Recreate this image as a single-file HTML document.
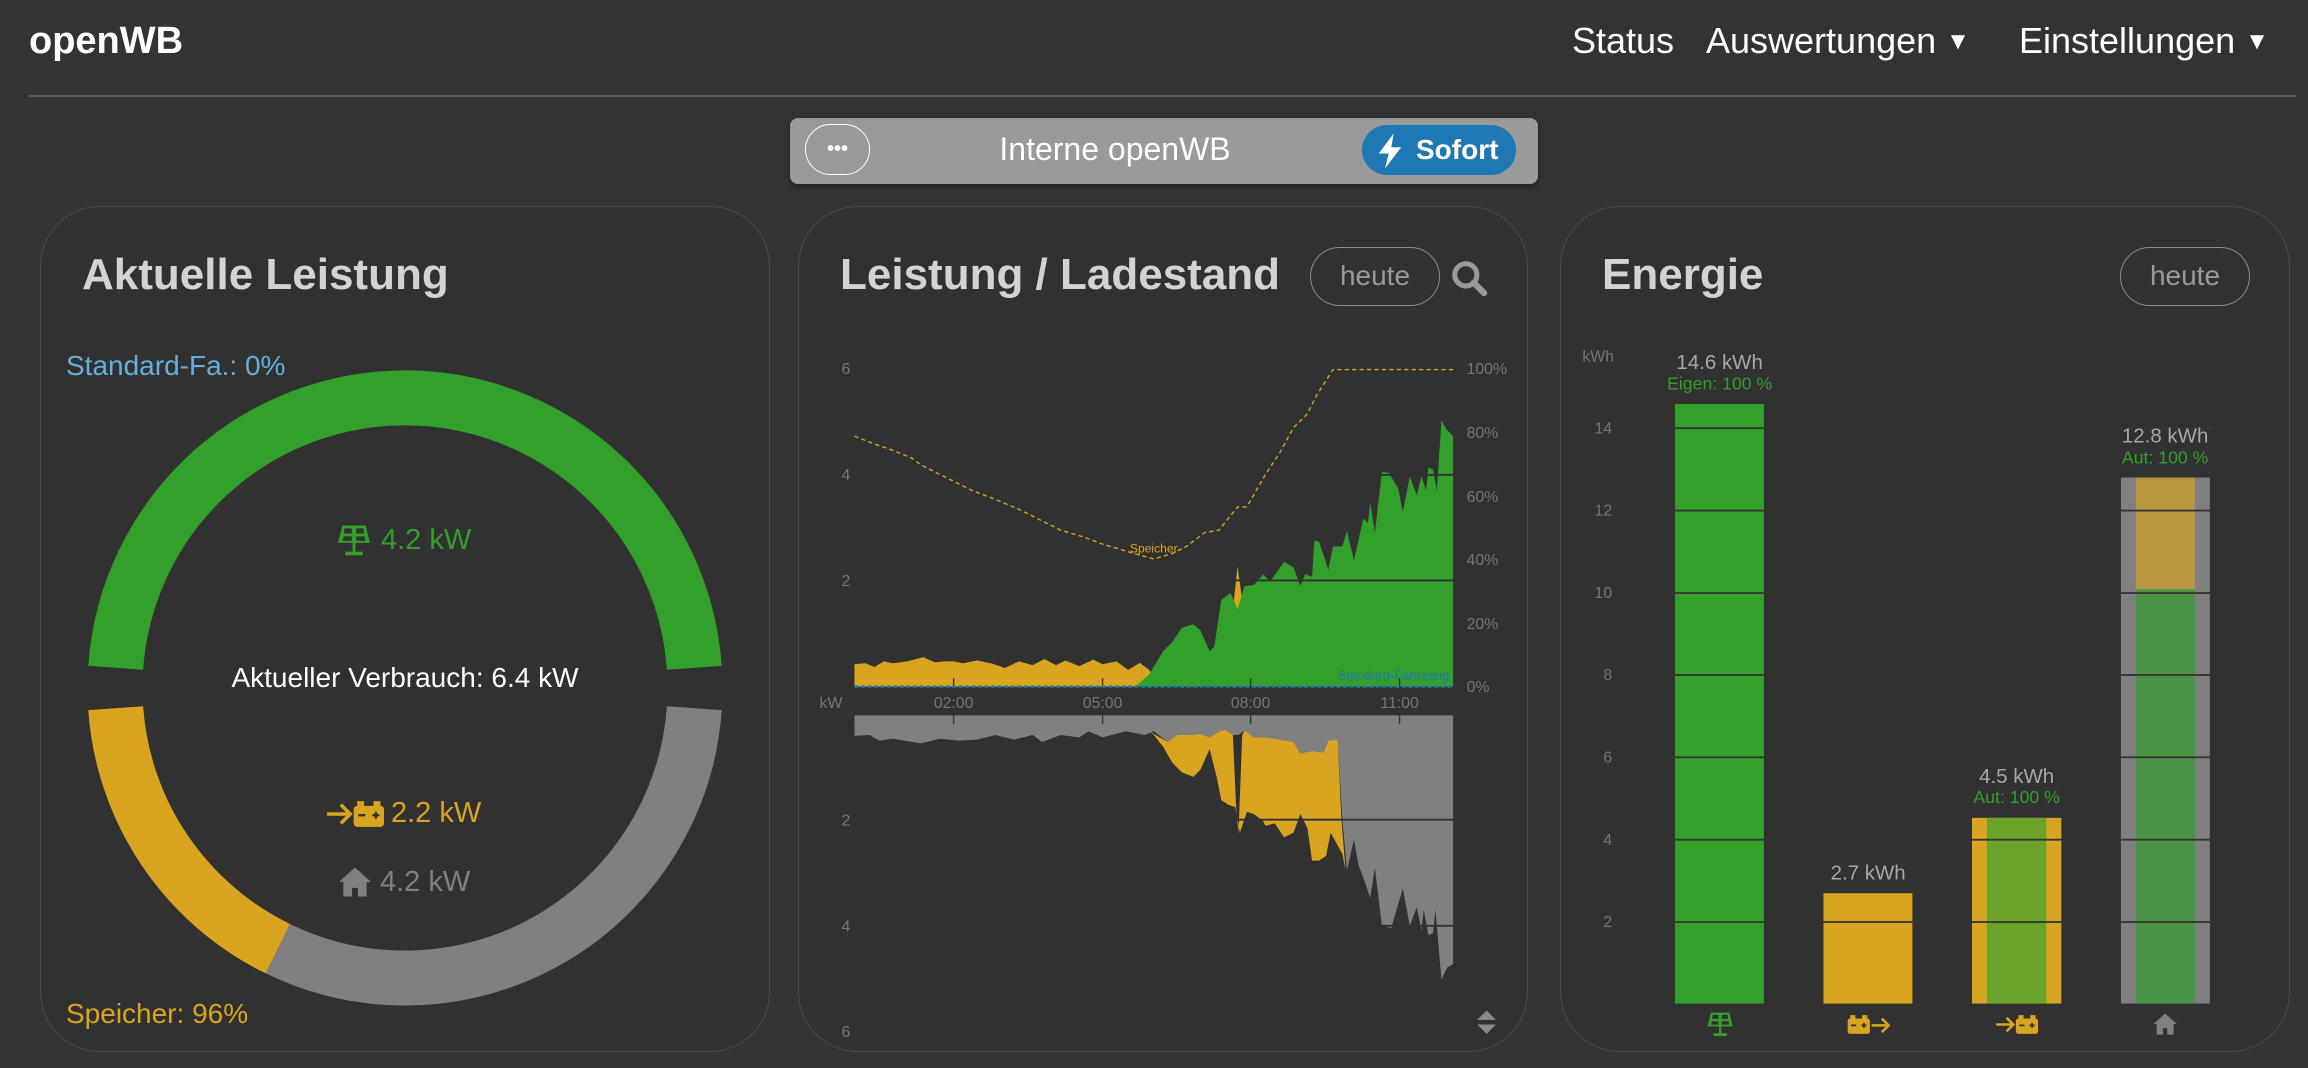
<!DOCTYPE html>
<html><head><meta charset="utf-8"><style>
*{margin:0;padding:0;box-sizing:border-box}
body{width:2308px;height:1068px;background:#333333;font-family:"Liberation Sans",sans-serif;overflow:hidden;position:relative}
.abs{position:absolute}
.card{position:absolute;top:206px;width:730px;height:846px;border:1px solid #4a4a4a;border-radius:60px;background:#313131}
.title{position:absolute;top:250px;font-size:44px;font-weight:bold;color:#d3d3d3;white-space:nowrap}
.btn{position:absolute;top:247px;width:130px;height:59px;border:1.5px solid #8a8a8a;border-radius:30px;color:#9a9a9a;font-size:28px;text-align:center;line-height:56px}
.nav{position:absolute;top:20px;font-size:36px;color:#fff;white-space:nowrap}
</style></head><body>
<div class="abs" style="left:29px;top:20px;font-size:38px;font-weight:bold;color:#fff">openWB</div>
<div class="nav" style="left:1572px">Status</div>
<div class="nav" style="left:1706px">Auswertungen <span style="font-size:24px;position:relative;top:-4px">▼</span></div>
<div class="nav" style="left:2019px">Einstellungen <span style="font-size:24px;position:relative;top:-4px">▼</span></div>
<div class="abs" style="left:29px;top:95px;width:2267px;height:2px;background:#5a5a5a"></div>

<div class="abs" style="left:790px;top:118px;width:748px;height:66px;background:#9a9a9a;border-radius:8px;box-shadow:0 2px 6px rgba(0,0,0,.4)"></div>
<div class="abs" style="left:805px;top:124px;width:65px;height:51px;border:1.5px solid #fff;border-radius:26px;color:#fff;font-size:20px;font-weight:bold;text-align:center;line-height:48px">•••</div>
<div class="abs" style="left:990px;top:131px;width:250px;text-align:center;color:#fff;font-size:32px">Interne openWB</div>
<div class="abs" style="left:1362px;top:125px;width:154px;height:50px;background:#1f78b4;border-radius:25px;color:#fff;font-size:28px;font-weight:bold;line-height:50px;padding-left:54px">Sofort</div>
<svg class="abs" style="left:1375px;top:132px" width="30" height="38" viewBox="0 0 24 30"><path d="M15 1 L3 17 H11 L8 29 L21 12 H13 Z" fill="#fff"/></svg>

<!-- Card 1 -->
<div class="card" style="left:40px"></div>
<div class="title" style="left:82px">Aktuelle Leistung</div>
<div class="abs" style="left:66px;top:350px;font-size:28px;color:#66aedb">Standard-Fa.: 0%</div>
<div class="abs" style="left:66px;top:998px;font-size:28px;color:#d9a521">Speicher: 96%</div>
<svg class="abs" style="left:0;top:0" width="800" height="1068">
<path d="M115.7,667.8 A290,290 0 0 1 694.3,667.8" fill="none" stroke="#33a02c" stroke-width="55"/>
<path d="M115.7,708.2 A290,290 0 0 0 277.9,948.7" fill="none" stroke="#d9a521" stroke-width="55"/>
<path d="M277.9,948.7 A290,290 0 0 0 694.3,708.2" fill="none" stroke="#808080" stroke-width="55"/>
</svg>
<svg class="abs" style="left:336px;top:524px" width="36" height="32" viewBox="0 0 24 22"><path d="M4 1H20L23 13H1Z" fill="#33a02c"/><path d="M5.5 3H10.5V6.5H5ZM13.5 3H18.5L19 6.5H13.5ZM5 8.5H10.5V11.5H4ZM13.5 8.5H19.2L20 11.5H13.5Z" fill="#313131"/><rect x="11" y="13" width="2" height="6" fill="#33a02c"/><rect x="6" y="19" width="12" height="2.5" fill="#33a02c"/></svg>
<div class="abs" style="left:381px;top:524px;font-size:29px;color:#33a02c">4.2 kW</div>
<div class="abs" style="left:105px;top:662px;width:600px;text-align:center;font-size:28px;color:#fff">Aktueller Verbrauch: 6.4 kW</div>
<svg class="abs" style="left:325px;top:800px" width="62" height="28" viewBox="0 0 52 24"><path d="M1 12H20M13 4L21 12L13 20" fill="none" stroke="#d9a521" stroke-width="3"/><rect x="24" y="5" width="26" height="18" rx="3" fill="#d9a521"/><rect x="27" y="1" width="6" height="5" fill="#d9a521"/><rect x="41" y="1" width="6" height="5" fill="#d9a521"/><path d="M28 13H34M40 13H46M43 10V16" stroke="#313131" stroke-width="2"/></svg>
<div class="abs" style="left:391px;top:797px;font-size:29px;color:#d9a521">2.2 kW</div>
<svg class="abs" style="left:337px;top:866px" width="36" height="32" viewBox="0 0 24 22"><path d="M12 1L1 11H4V21H10V15H14V21H20V11H23Z" fill="#808080"/></svg>
<div class="abs" style="left:380px;top:866px;font-size:29px;color:#808080">4.2 kW</div>

<!-- Card 2 -->
<div class="card" style="left:798px"></div>
<div class="title" style="left:840px">Leistung / Ladestand</div>
<div class="btn" style="left:1310px">heute</div>
<svg class="abs" style="left:1450px;top:258px" width="38" height="40" viewBox="0 0 24 24"><circle cx="10" cy="10" r="7" fill="none" stroke="#9a9a9a" stroke-width="3.2"/><path d="M15 15L21.5 21.5" stroke="#9a9a9a" stroke-width="4" stroke-linecap="round"/></svg>
<svg class="abs" style="left:0;top:0" width="2308" height="1068">
<g transform="translate(800,330) scale(0.4655)" font-family="Liberation Sans, sans-serif" font-size="34" fill="#777">
<path d="M117,766 L117,718 L140,716 L160,724 L180,712 L200,716 L230,712 L265,703 L290,714 L310,712 L330,712 L350,716 L380,710 L410,716 L440,726 L470,712 L500,720 L525,707 L550,720 L570,710 L600,722 L630,708 L650,718 L680,712 L705,730 L730,715 L750,730 L760,745 L740,766 Z" fill="#d9a521"/>
<path d="M930,600 L940,508 L950,580 L940,620 Z" fill="#d9a521"/>
<path d="M720,766 L750,740 L780,690 L800,670 L820,640 L845,632 L860,645 L880,690 L890,680 L905,580 L925,565 L940,600 L955,550 L975,548 L995,525 L1010,540 L1040,498 L1060,510 L1075,550 L1085,525 L1100,530 L1105,452 L1115,455 L1135,515 L1145,465 L1165,465 L1175,432 L1190,495 L1210,405 L1220,415 L1225,370 L1235,435 L1250,305 L1265,307 L1285,340 L1295,390 L1310,315 L1325,355 L1335,315 L1345,345 L1350,295 L1360,300 L1368,345 L1378,195 L1390,215 L1403,228 L1403,766 Z" fill="#33a02c"/>
<path d="M117,828 L1403,828 L1403,1362 L1390,1370 L1378,1395 L1365,1245 L1360,1295 L1350,1300 L1340,1245 L1335,1290 L1325,1240 L1310,1280 L1295,1200 L1270,1285 L1250,1280 L1235,1155 L1225,1220 L1215,1190 L1200,1150 L1190,1095 L1175,1160 L1165,1050 L1155,880 L1135,882 L1125,908 L1075,910 L1060,885 L1000,875 L975,875 L955,860 L942,870 L937,870 L930,870 L915,860 L905,860 L880,875 L860,868 L845,870 L810,870 L790,885 L760,862 L740,870 L700,862 L650,875 L620,862 L600,875 L560,870 L520,885 L500,870 L460,880 L420,870 L380,880 L340,882 L300,878 L260,888 L200,878 L170,882 L150,870 L117,872 Z" fill="#808080"/>
<path d="M750,862 L790,885 L810,870 L845,870 L860,868 L880,875 L905,860 L915,860 L930,870 L937,1030 L942,1080 L950,870 L955,860 L975,875 L1000,875 L1030,880 L1060,885 L1075,910 L1100,905 L1125,908 L1135,882 L1155,880 L1163,1050 L1172,1160 L1165,1125 L1140,1080 L1130,1130 L1115,1140 L1100,1140 L1090,1070 L1075,1040 L1060,1080 L1040,1090 L1020,1060 L1000,1065 L995,1055 L975,1040 L960,1035 L945,1080 L935,1025 L920,1020 L905,1010 L895,960 L880,900 L860,945 L845,960 L820,950 L800,930 L780,895 L760,870 Z" fill="#d9a521"/>
<g stroke="#303030" stroke-width="4"><path d="M117,311H1403M117,538H1403M117,1052H1403M117,1280H1403"/></g>
<g stroke="#333" stroke-width="3"><path d="M330,748V766M650,748V766M968,748V766M1288,748V766M330,828V846M650,828V846M968,828V846M1288,828V846"/></g>
<path d="M117,766H1403" stroke="#1f78b4" stroke-width="5" stroke-dasharray="8,6"/>
<polyline points="117,228 160,245 190,255 240,275 260,290 300,310 340,330 370,345 410,360 470,385 520,410 560,430 610,445 650,460 700,475 760,492 800,480 830,465 870,435 900,430 940,380 960,380 1000,310 1030,265 1060,210 1090,180 1110,140 1145,85 1403,85" fill="none" stroke="#d9a521" stroke-width="3" stroke-dasharray="9,7"/>
<text x="760" y="478" fill="#d9a521" font-size="26" text-anchor="middle">Speicher</text>
<text x="1395" y="752" fill="#1f78b4" font-size="28" text-anchor="end">Standard-Fahrzeug</text>
<g text-anchor="end"><text x="108" y="95">6</text><text x="108" y="322">4</text><text x="108" y="550">2</text><text x="108" y="1064">2</text><text x="108" y="1292">4</text><text x="108" y="1519">6</text></g>
<g><text x="1432" y="95">100%</text><text x="1432" y="232">80%</text><text x="1432" y="369">60%</text><text x="1432" y="505">40%</text><text x="1432" y="642">20%</text><text x="1432" y="778">0%</text></g>
<text x="42" y="812">kW</text>
<g text-anchor="middle"><text x="330" y="812">02:00</text><text x="650" y="812">05:00</text><text x="968" y="812">08:00</text><text x="1288" y="812">11:00</text></g>
<path d="M1475,1462L1495,1482H1455Z M1475,1512L1495,1492H1455Z" fill="#8a8a8a"/>
</g>
</svg>

<!-- Card 3 -->
<div class="card" style="left:1560px"></div>
<div class="title" style="left:1602px">Energie</div>
<div class="btn" style="left:2120px">heute</div>
<svg class="abs" style="left:0;top:0" width="2308" height="1068">
<g transform="translate(1560,330) scale(0.4655)" font-family="Liberation Sans, sans-serif">
<rect x="247" y="159" width="191" height="1288" fill="#33a02c"/>
<rect x="566" y="1210" width="191" height="237" fill="#d9a521"/>
<rect x="885" y="1048" width="192" height="399" fill="#d9a521"/>
<rect x="917" y="1048" width="128" height="399" fill="#6aa22a"/>
<rect x="1205" y="317" width="191" height="1130" fill="#808080"/>
<rect x="1237" y="317" width="127" height="240" fill="#b8953f"/>
<rect x="1237" y="557" width="127" height="890" fill="#4a9448"/>
<g stroke="#363636" stroke-width="4"><path d="M240,211H1400M240,388H1400M240,565H1400M240,741H1400M240,918H1400M240,1095H1400M240,1272H1400"/></g>
<rect x="440" y="150" width="124" height="1300" fill="#313131"/>
<rect x="759" y="150" width="124" height="1300" fill="#313131"/>
<rect x="1079" y="150" width="124" height="1300" fill="#313131"/>
<rect x="566" y="150" width="191" height="1058" fill="#313131"/>
<rect x="885" y="150" width="192" height="896" fill="#313131"/>
<g fill="#777" font-size="34" text-anchor="end"><text x="112" y="222">14</text><text x="112" y="399">12</text><text x="112" y="576">10</text><text x="112" y="752">8</text><text x="112" y="929">6</text><text x="112" y="1106">4</text><text x="112" y="1283">2</text><text x="116" y="68">kWh</text></g>
<g font-size="44" text-anchor="middle" fill="#a8a8a8"><text x="343" y="84">14.6 kWh</text><text x="662" y="1180">2.7 kWh</text><text x="981" y="973">4.5 kWh</text><text x="1300" y="242">12.8 kWh</text></g>
<g font-size="38" text-anchor="middle" fill="#33a02c"><text x="343" y="128">Eigen: 100 %</text><text x="981" y="1016">Aut: 100 %</text><text x="1300" y="287">Aut: 100 %</text></g>
<svg x="313" y="1464" width="62" height="54" viewBox="0 0 24 22"><path d="M4 1H20L23 13H1Z" fill="#33a02c"/><path d="M5.5 3H10.5V6.5H5ZM13.5 3H18.5L19 6.5H13.5ZM5 8.5H10.5V11.5H4ZM13.5 8.5H19.2L20 11.5H13.5Z" fill="#313131"/><rect x="11" y="13" width="2" height="6" fill="#33a02c"/><rect x="6" y="19" width="12" height="2.5" fill="#33a02c"/></svg>
<svg x="614" y="1470" width="96" height="44" viewBox="0 0 52 24"><rect x="2" y="5" width="26" height="18" rx="3" fill="#d9a521"/><rect x="5" y="1" width="6" height="5" fill="#d9a521"/><rect x="19" y="1" width="6" height="5" fill="#d9a521"/><path d="M6 13H12M18 13H24M21 10V16" stroke="#313131" stroke-width="2"/><path d="M30 13H49M42 5L50 13L42 21" fill="none" stroke="#d9a521" stroke-width="3"/></svg>
<svg x="935" y="1470" width="96" height="44" viewBox="0 0 52 24"><path d="M1 12H20M13 4L21 12L13 20" fill="none" stroke="#d9a521" stroke-width="3"/><rect x="24" y="5" width="26" height="18" rx="3" fill="#d9a521"/><rect x="27" y="1" width="6" height="5" fill="#d9a521"/><rect x="41" y="1" width="6" height="5" fill="#d9a521"/><path d="M28 13H34M40 13H46M43 10V16" stroke="#313131" stroke-width="2"/></svg>
<svg x="1272" y="1466" width="56" height="50" viewBox="0 0 24 22"><path d="M12 1L1 11H4V21H10V15H14V21H20V11H23Z" fill="#808080"/></svg>
</g>
</svg>
</body></html>
